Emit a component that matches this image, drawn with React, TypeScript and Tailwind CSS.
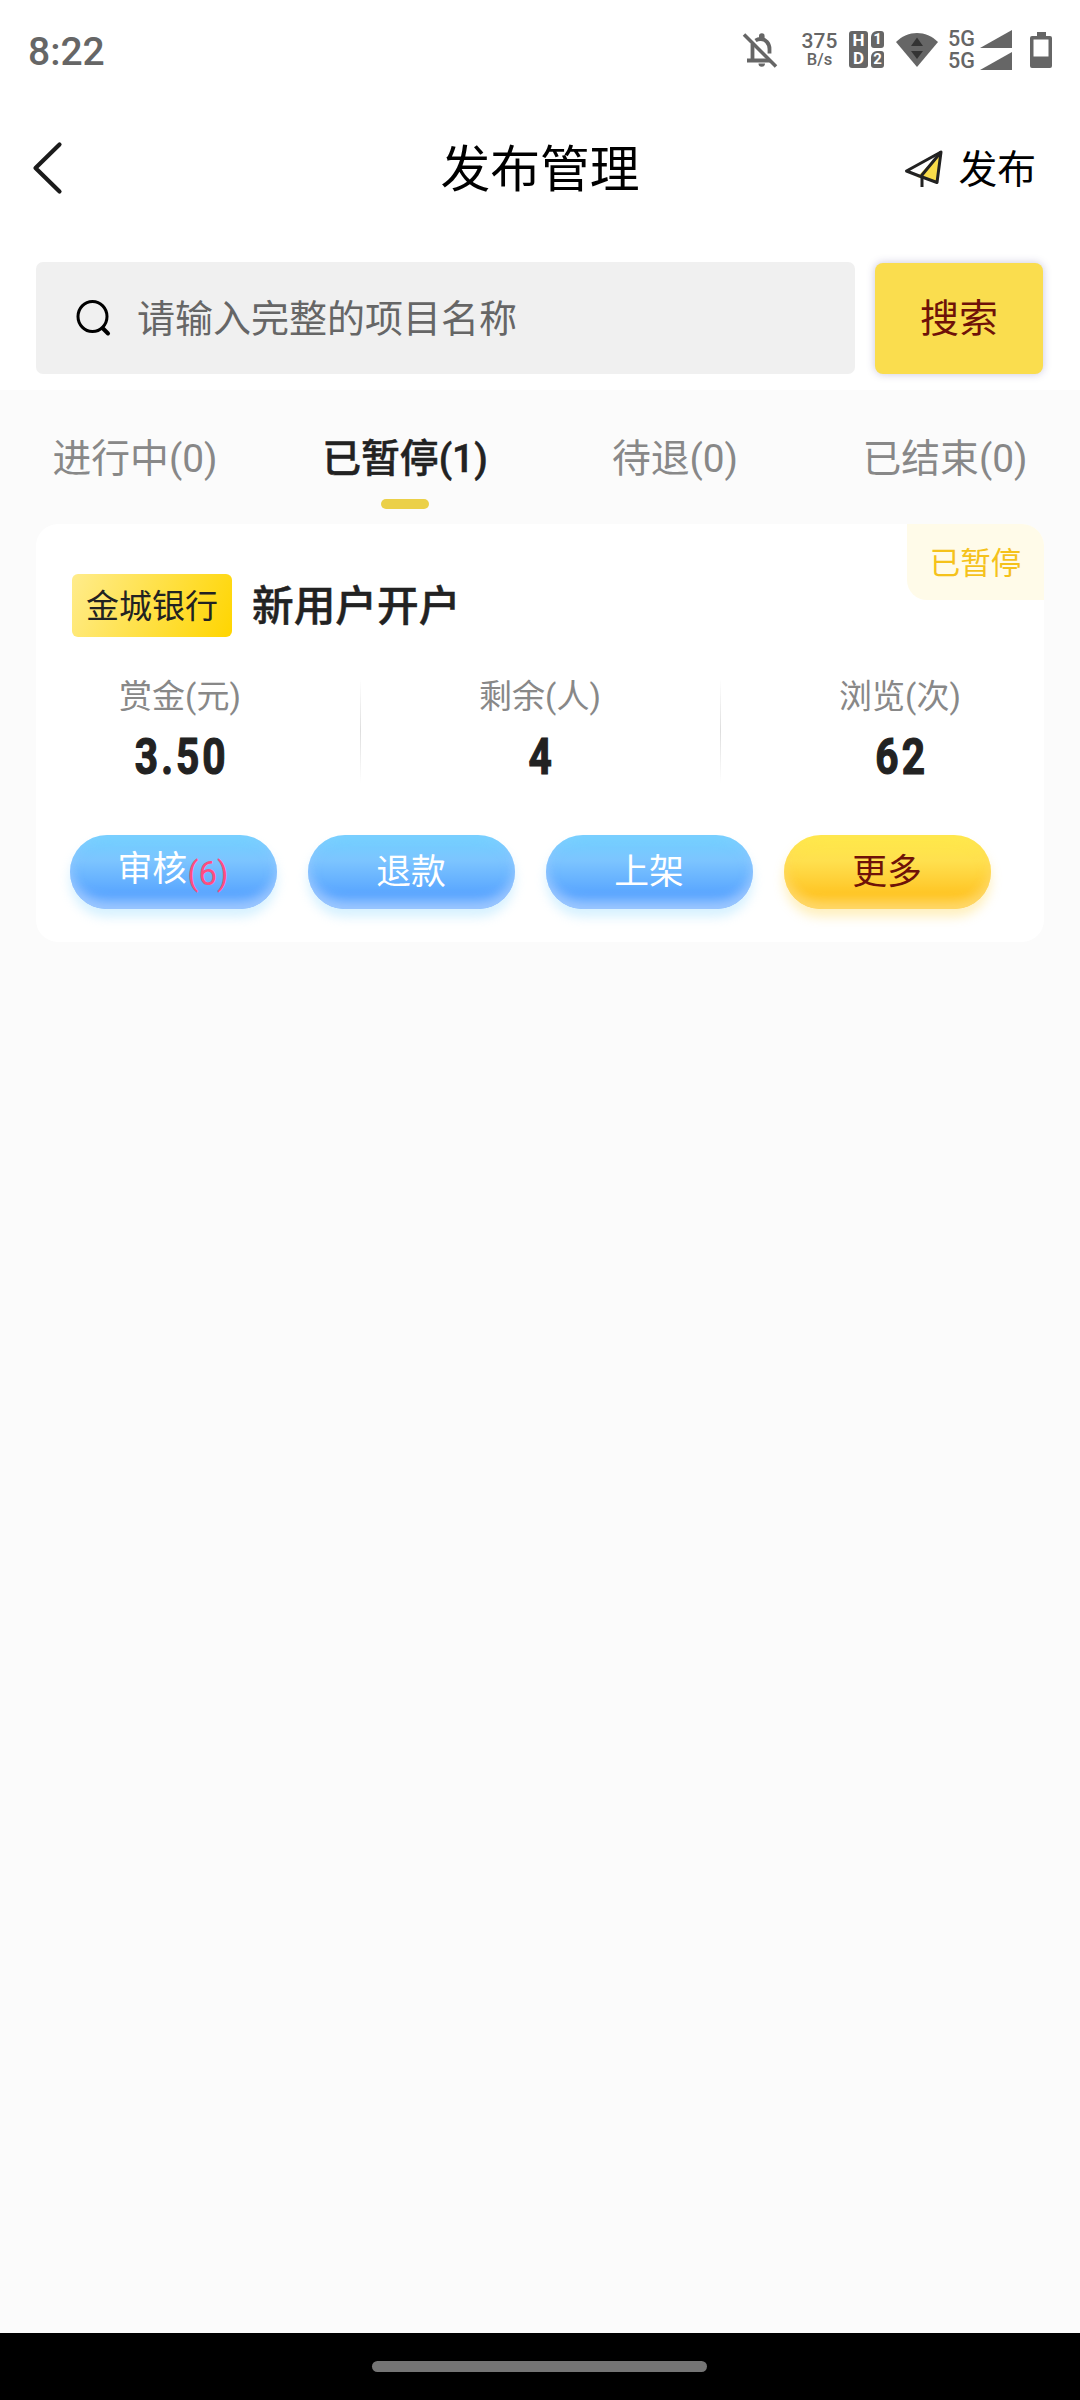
import { clsx } from "clsx";

const tabs = [
  { label: "进行中", count: 0 },
  { label: "已暂停", count: 1 },
  { label: "待退", count: 0 },
  { label: "已结束", count: 0 },
];

const stats = [
  { label: "赏金(元)", value: "3.50" },
  { label: "剩余(人)", value: "4" },
  { label: "浏览(次)", value: "62" },
];

const blueBtn =
  "text-white bg-linear-to-b from-[#72d0ff] from-5% via-[#7cc4ff] via-35% to-[#58a5ff] to-80% shadow-[0_8px_11px_rgba(200,236,255,0.75),inset_0_-11px_12px_-3px_rgba(160,200,255,0.95),inset_0_0_14px_rgba(150,205,255,0.45)]";
const yellowBtn =
  "text-[#6f1208] bg-linear-to-b from-[#ffe94a] from-5% via-[#ffe04e] via-35% to-[#ffc521] to-80% shadow-[0_8px_11px_rgba(255,236,175,0.8),inset_0_-11px_12px_-3px_rgba(255,216,110,0.95),inset_0_0_14px_rgba(255,222,90,0.45)]";

function StatusBar() {
  return (
    <div className="flex h-[102px] items-center pl-[28px] pr-[28px] text-[#666]">
      <span className="pt-[1px] text-[39px] leading-[46px] font-medium">8:22</span>

      <div className="mb-[3px] ml-auto flex items-center">
        {/* Muted bell */}
        <svg width="36" height="36" viewBox="0 0 36 36" fill="none" stroke="currentColor">
          <path d="M2 2.500 34 34.500" strokeWidth="3.600" />
          <path d="M10.500 12v16M5 28.500h23" strokeWidth="3.800" />
          <path d="M13.500 8.500c1.500-1 3-1.500 5-1.500 5 0 9 4.300 9 10v4.500" strokeWidth="3.800" />
          <path d="M17 7V4a2.800 2.800 0 0 1 5.600 0v3z" fill="currentColor" stroke="none" />
          <path d="M16.500 31.500h6.500a3.200 3.200 0 0 1-6.500 0z" fill="currentColor" stroke="none" />
        </svg>

        {/* Network speed */}
        <div className="ml-[23px] flex w-[37px] flex-col items-center font-medium">
          <span className="text-[21px] leading-[20px]">375</span>
          <span className="text-[16.5px] leading-[17px]">B/s</span>
        </div>

        {/* HD voice, both sims */}
        <div className="ml-[11px] flex gap-[3px] font-bold text-white">
          <div className="flex h-[37px] w-[19px] flex-col items-center justify-around rounded-[3px] bg-[#666] text-[17px] leading-[17px]">
            <span>H</span>
            <span>D</span>
          </div>
          <div className="flex w-[13px] flex-col justify-between text-center text-[15px] leading-[17px]">
            <span className="h-[17px] rounded-[3px] rounded-tl-[6px] bg-[#666]">1</span>
            <span className="h-[17px] rounded-[3px] rounded-tl-[6px] bg-[#666]">2</span>
          </div>
        </div>

        {/* Wifi */}
        <svg className="ml-[12px]" width="42" height="36" viewBox="0 0 42 36">
          <path d="M0 10C12-2 30-2 42 10L21 35z" fill="#666" />
          <path d="M21 5.500 27 14H15zM15 19h12l-6 8z" fill="#333" />
        </svg>

        {/* Signal */}
        <div className="ml-[10px] flex flex-col gap-[1px] text-[21.5px] leading-[21px] font-medium">
          {[0, 1].map((i) => (
            <div key={i} className="flex items-center gap-[3px]">
              <span className="w-[29px]">5G</span>
              <svg width="32" height="18" viewBox="0 0 32 18">
                <path d="M32 0v18H0z" fill="currentColor" />
              </svg>
            </div>
          ))}
        </div>

        {/* Battery */}
        <svg className="ml-[18px]" width="22" height="36" viewBox="0 0 22 36">
          <path
            d="M7 0h9v4h4a2 2 0 0 1 2 2v28a2 2 0 0 1-2 2H2a2 2 0 0 1-2-2V6a2 2 0 0 1 2-2h5zM3.500 7.500v17h15v-17z"
            fill="currentColor"
            fillRule="evenodd"
          />
        </svg>
      </div>
    </div>
  );
}

function Header() {
  return (
    <div className="grid h-[134px] grid-cols-3 items-center pr-[44px] pl-[32px] text-black">
      <svg className="-mt-[2px]" width="32" height="54" viewBox="0 0 32 54" fill="none" stroke="#1b1b1b">
        <path d="M27.500 3.500 3.500 27l24 23.500" strokeWidth="4.200" strokeLinecap="round" strokeLinejoin="round" />
      </svg>
      <h1 className="pt-[1px] pl-[12px] text-center text-[49.8px] leading-[60px]">发布管理</h1>
      <div className="flex items-center justify-end gap-[13px] text-[38.8px] leading-[50px]">
        <svg className="-mt-[2px] mr-[1px]" width="40" height="40" viewBox="0 0 40 40" fill="none">
          <path d="M37 4 17 25l-4 4 20 5z" fill="#f9dc4a" />
          <path d="M37 4 2.500 23 14 27.500 33 34.500z" stroke="#222" strokeWidth="3" strokeLinejoin="round" />
          <path d="M37 4 18 27v12" stroke="#222" strokeWidth="3" strokeLinejoin="round" />
        </svg>
        <span className="pt-[2px]">发布</span>
      </div>
    </div>
  );
}

function SearchBar() {
  return (
    <div className="flex h-[154px] gap-[20px] px-[36px] pt-[26px]">
      <div className="flex h-[112px] w-[819px] items-center rounded-[7px] bg-[#f0f0f0] pl-[40px]">
        <svg className="-mt-[1px]" width="36" height="38" viewBox="0 0 36 38" fill="none" stroke="#000">
          <ellipse cx="16.500" cy="17.500" rx="14.500" ry="15" strokeWidth="3" />
          <path d="m27 29.500 5 5" strokeWidth="4" strokeLinecap="round" />
        </svg>
        <span className="ml-[25px] pt-[2px] text-[38px] leading-[50px] text-[#666]">请输入完整的项目名称</span>
      </div>
      <button className="mt-[1px] h-[111px] w-[168px] rounded-[8px] bg-[#fadd4e] pt-[2px] text-[39px] text-[#6f1208] shadow-[0_0_9px_rgba(60,50,130,0.28)]">
        搜索
      </button>
    </div>
  );
}

function Tabs() {
  return (
    <div className="grid h-[134px] grid-cols-4 pt-[42px]">
      {tabs.map((tab, i) => (
        <div key={tab.label} className="flex flex-col items-center">
          <span
            className={clsx(
              "text-[38.8px] leading-[54px]",
              i === 1 ? "font-medium text-[#222] [-webkit-text-stroke:0.5px_#222]" : "text-[#888]"
            )}
          >
            {tab.label}({tab.count})
          </span>
          {i === 1 && <span className="mt-[13px] h-[10px] w-[48px] rounded-full bg-[#ebd048]" />}
        </div>
      ))}
    </div>
  );
}

function TaskCard() {
  return (
    <div className="relative mx-[36px] h-[418px] overflow-hidden rounded-[22px] bg-white">
      <span className="absolute top-0 right-0 h-[76px] w-[137px] rounded-bl-[20px] bg-[#fffbe9] text-center text-[30.5px] leading-[80px] text-[#f5c21b]">
        已暂停
      </span>

      <div className="flex items-center pt-[50px] pl-[36px]">
        <span className="h-[63px] w-[160px] rounded-[6px] bg-linear-[115deg,#ffec8c,#ffd500] text-center text-[33px] leading-[65px] text-[#222]">
          金城银行
        </span>
        <span className="ml-[20px] pt-[3px] text-[41.7px] leading-[60px] font-medium text-[#222] [-webkit-text-stroke:0.5px_#222]">
          新用户开户
        </span>
      </div>

      {/* Stats */}
      <div className="-mx-[36px] mt-[30px] grid grid-cols-3">
        {stats.map((stat, i) => (
          <div key={stat.label} className="relative flex flex-col items-center">
            {i > 0 && (
              <span className="absolute top-[12px] left-0 h-[104px] w-px bg-linear-to-b from-white via-[#dedede] to-white" />
            )}
            <span className="mt-[3px] text-[33px] leading-[54px] text-[#888]">{stat.label}</span>
            <span className="mt-[5px] scale-x-[0.82] pl-[5px] text-[49.5px] leading-[56px] font-bold tracking-[3.7px] text-[#222] [-webkit-text-stroke:1.2px_#222]">
              {stat.value}
            </span>
          </div>
        ))}
      </div>

      {/* Actions */}
      <div className="mt-[50px] flex gap-[31px] pl-[33.500px] text-[34.8px]">
        <button className={clsx("flex h-[74px] w-[207px] items-center justify-center rounded-full", blueBtn)}>
          <span className="-mt-[6px]">审核</span>
          <span className="mt-[3px] text-[33px] text-[#ff4d80]">(6)</span>
        </button>
        <button className={clsx("h-[74px] w-[207px] rounded-full pt-[1px]", blueBtn)}>退款</button>
        <button className={clsx("h-[74px] w-[207px] rounded-full pt-[1px]", blueBtn)}>上架</button>
        <button className={clsx("h-[74px] w-[207px] rounded-full pt-[1px]", yellowBtn)}>更多</button>
      </div>
    </div>
  );
}

export default function App() {
  return (
    <div className="flex h-[2400px] w-[1080px] flex-col bg-[#fbfbfb] font-['Roboto','Noto_Sans_CJK_SC',sans-serif]">
      <div className="bg-white">
        <StatusBar />
        <Header />
        <SearchBar />
      </div>
      <Tabs />
      <TaskCard />

      {/* Gesture bar */}
      <div className="mt-auto flex h-[67px] justify-center bg-black pt-[28px] pr-[1px]">
        <span className="h-[11px] w-[335px] rounded-full bg-[#757575]" />
      </div>
    </div>
  );
}
